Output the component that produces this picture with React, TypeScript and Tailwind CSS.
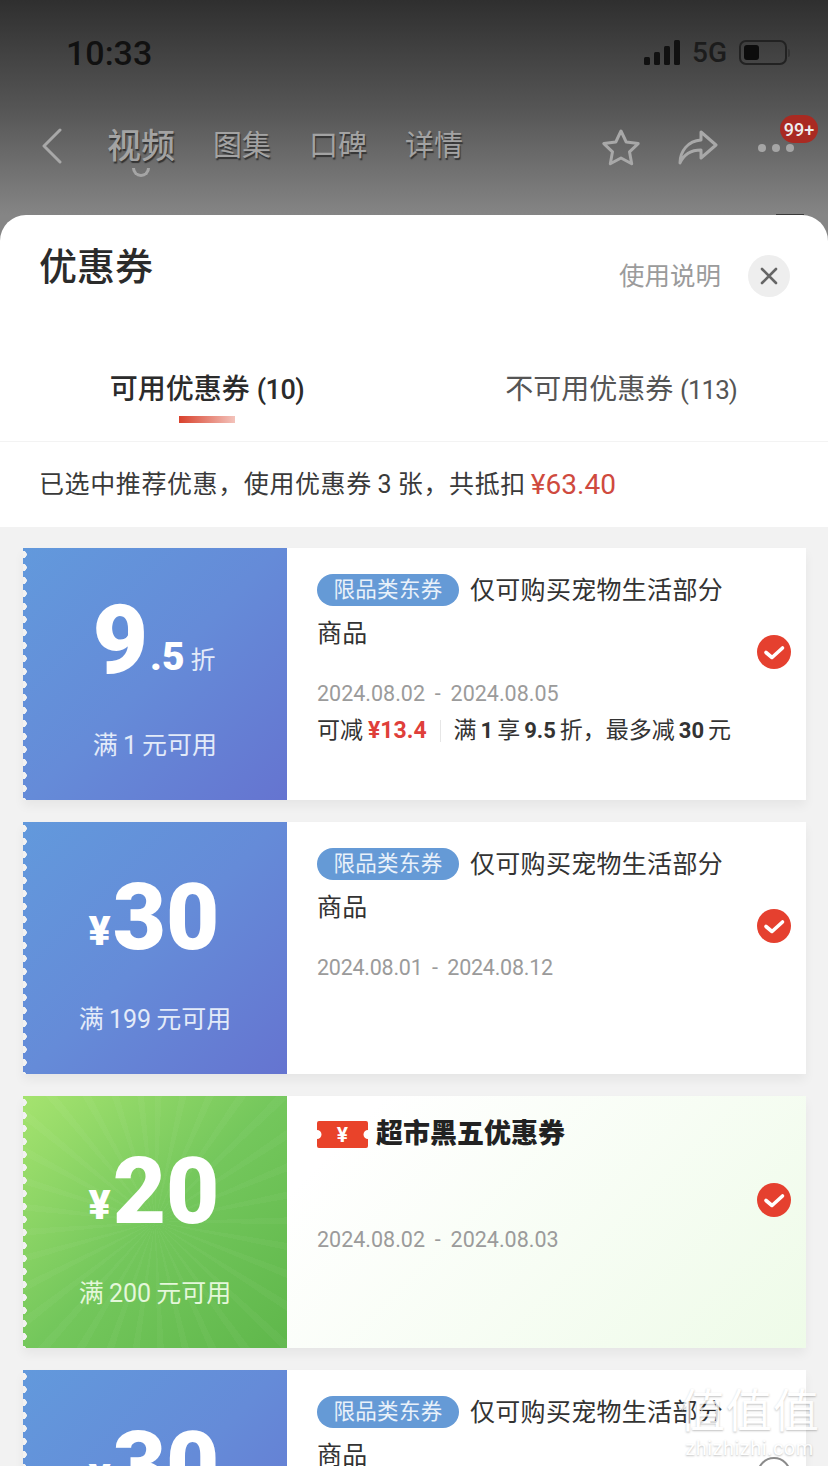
const font = "font-['Roboto','Noto_Sans_CJK_SC',sans-serif]";

function Check({ on = true }: { on?: boolean }) {
  if (!on) {
    return <div className="mt-[87px] mr-[15px] h-[34px] w-[34px] shrink-0 rounded-full border-2 border-[#8a8a8a] bg-white" />;
  }
  return (
    <svg className="mt-[87px] mr-[15px] h-[34px] w-[34px] shrink-0" viewBox="0 0 34 34">
      <circle cx="17" cy="17" r="17" fill="#e5402f" />
      <path d="M9 17.5l6 5 10.5-9.5" fill="none" stroke="#fff" strokeWidth="3.6" strokeLinecap="round" strokeLinejoin="round" />
    </svg>
  );
}

function Pill() {
  return (
    <span className="mr-[11px] inline-block h-[32px] w-[142px] rounded-full bg-[#659ad6] text-center align-[2px] text-[21.5px] leading-[32px] text-[#e9f1fa]">
      限品类东券
    </span>
  );
}

function Title() {
  return (
    <p className="w-[415px] pt-[21px] text-[25px] leading-[43px] tracking-[0.3px] text-[#333]">
      <Pill />
      仅可购买宠物生活部分商品
    </p>
  );
}

function Dates({ text, tight }: { text: string; tight?: boolean }) {
  return (
    <p className={`mt-[24px] text-[21.5px] leading-[30px] text-[#9b9b9b] [word-spacing:4.5px] ${tight ? "tracking-[-0.25px]" : ""}`}>
      {text}
    </p>
  );
}

function Stub({ green, children, label }: { green?: boolean; children: React.ReactNode; label: string }) {
  return (
    <div
      className={`relative flex w-[264px] shrink-0 flex-col items-center overflow-hidden ${
        green
          ? "bg-[linear-gradient(135deg,#a5e36f_0%,#74c75c_50%,#5fb74b_100%)]"
          : "bg-[linear-gradient(135deg,#6299dc_0%,#658bd8_50%,#6574d0_100%)]"
      }`}
    >
      {green && (
        <div className="absolute inset-0 bg-[repeating-conic-gradient(from_0deg_at_50%_50%,rgba(255,255,255,0.03)_0deg_3deg,transparent_3deg_11deg)]" />
      )}
      <div className="absolute inset-y-0 left-0 w-[4px] bg-[radial-gradient(circle_at_0_50%,#f2f2f2_3.5px,transparent_4px)] bg-[length:4px_13px]" />
      <div className="relative flex h-[142px] items-end pr-[2px]">{children}</div>
      <p className={`relative mt-[38px] text-[25px] leading-[36px] ${green ? "text-[#e4f7da]" : "text-[#e3ebf9]"}`}>{label}</p>
    </div>
  );
}

function Amount({ value }: { value: string }) {
  return (
    <div className="flex items-end font-black text-white">
      <span className="mb-[12px] mr-[2px] text-[41px] leading-[41px]">¥</span>
      <span className="text-[92px] leading-[92px]">{value}</span>
    </div>
  );
}

function Card({ children, stub, bg = "bg-white" }: { children: React.ReactNode; stub: React.ReactNode; bg?: string }) {
  return (
    <div className={`flex h-[252px] shrink-0 shadow-[0_6px_10px_rgba(0,0,0,0.05)] ${bg}`}>
      {stub}
      <div className="flex-1 pl-[30px]">{children}</div>
    </div>
  );
}

export default function App() {
  return (
    <div className={`relative h-[1466px] w-[828px] overflow-hidden bg-[linear-gradient(180deg,#2f2f2f_0px,#565656_110px,#858585_215px)] ${font}`}>
      <div className="flex h-[105px] items-center justify-between pr-[38px] pl-[66px]">
        <span className="text-[34px] leading-none font-medium text-[#111]">10:33</span>
        <div className="flex items-center gap-[10px]">
          <svg className="h-[26px] w-[38px]" viewBox="0 0 38 26" fill="#111">
            <rect x="0" y="17" width="6" height="8" rx="1.5" />
            <rect x="10" y="12" width="6" height="13" rx="1.5" />
            <rect x="20" y="6" width="6" height="19" rx="1.5" />
            <rect x="30" y="0" width="6" height="25" rx="1.5" />
          </svg>
          <span className="text-[28px] leading-none font-medium text-[#1c1c1c]">5G</span>
          <div className="ml-[2px] flex items-center">
            <div className="h-[25px] w-[48px] rounded-[7px] border-2 border-[#222] p-[3px]">
              <div className="h-full w-[15px] rounded-[3px] bg-[#0c0c0c]" />
            </div>
            <div className="ml-[1px] h-[8px] w-[2px] rounded-r bg-[#333]" />
          </div>
        </div>
      </div>

      <div className="relative flex h-[110px] items-start pt-[18px]">
        <svg className="mt-[5px] ml-[41px] h-[36px] w-[22px]" viewBox="0 0 22 36" fill="none" stroke="#a8a8a8" strokeWidth="3" strokeLinecap="round" strokeLinejoin="round">
          <path d="M19 2L3 18l16 16" />
        </svg>
        <div className="ml-[44px] flex items-center gap-[38px] text-[#a3a3a3] [text-shadow:1px_2px_1px_#333]">
          <span className="relative text-[34px] leading-[46px] font-medium">
            视频
            <span className="absolute top-[45px] left-[25px] h-[9px] w-[18px] rounded-b-full border-x-[3px] border-b-[3px] border-[#a5a5a5]" />
          </span>
          <span className="text-[29px] leading-[46px]">图集</span>
          <span className="text-[29px] leading-[46px]">口碑</span>
          <span className="text-[29px] leading-[46px]">详情</span>
        </div>
        <div className="ml-auto flex items-center pr-[34px]">
          <svg className="mt-[5px] h-[40px] w-[40px]" viewBox="0 0 40 40" fill="none" stroke="#a8a8a8" strokeWidth="3" strokeLinejoin="round">
            <path d="M20 3l5.2 11 12 1.6-8.7 8.2 2.2 12L20 30l-10.700 5.800 2.200-12L2.800 15.600l12-1.600z" />
          </svg>
          <svg className="mt-[5px] ml-[37px] h-[38px] w-[40px]" viewBox="0 0 40 38" fill="none" stroke="#a8a8a8" strokeWidth="3" strokeLinejoin="round" strokeLinecap="round">
            <path d="M23 3l15 13-15 13v-8C13 21 6 25 2 34c0-12 8-22 21-23z" />
          </svg>
          <div className="relative mt-[5px] ml-[40px] flex gap-[6px]">
            <span className="h-[8px] w-[8px] rounded-full bg-[#a5a5a5]" />
            <span className="h-[8px] w-[8px] rounded-full bg-[#a5a5a5]" />
            <span className="h-[8px] w-[8px] rounded-full bg-[#a5a5a5]" />
            <span className="absolute -top-[29px] -right-[24px] flex h-[28px] w-[38px] items-center justify-center rounded-full bg-[#a92a22] text-[18px] font-medium text-[#eee]">
              99+
            </span>
          </div>
        </div>
        <span className="absolute right-[24px] bottom-0 h-px w-[28px] bg-[#3a3a3a]" />
      </div>

      <div className="flex h-[1251px] flex-col overflow-hidden rounded-t-[26px] bg-white">
        <div className="flex h-[109px] shrink-0 items-start justify-between pt-[24px] pr-[38px] pl-[39px]">
          <h1 className="text-[38px] leading-[56px] font-medium text-[#2b2b2b]">优惠券</h1>
          <div className="flex items-center gap-[27px] pt-[16px]">
            <span className="text-[25.500px] leading-[42px] text-[#9b9b9b]">使用说明</span>
            <div className="flex h-[42px] w-[42px] items-center justify-center rounded-full bg-[#eeeeee]">
              <svg className="h-[20px] w-[20px]" viewBox="0 0 20 20" fill="none" stroke="#666" strokeWidth="2.6" strokeLinecap="round">
                <path d="M3 3l14 14M17 3L3 17" />
              </svg>
            </div>
          </div>
        </div>

        <div className="grid h-[118px] shrink-0 grid-cols-2 border-b border-[#f3f3f3] pt-[44px] text-center text-[28px] leading-[44px]">
          <div className="flex flex-col items-center font-medium text-[#2b2b2b]">
            <span>可用优惠券 <span className="text-[27px] tracking-[-0.5px]">(10)</span></span>
            <span className="mt-[4px] h-[7px] w-[56px] bg-[linear-gradient(90deg,#d9412c_0%,#f3c3bb_100%)]" />
          </div>
          <span className="text-[#555]">不可用优惠券 <span className="text-[26px] tracking-[-1px]">(113)</span></span>
        </div>

        <div className="flex h-[85px] shrink-0 items-center pl-[39px] text-[25px] tracking-[0.6px] text-[#3a3a3a]">
          已选中推荐优惠，使用优惠券&thinsp;3&thinsp;张，共抵扣
          <span className="ml-[5px] text-[28px] tracking-normal text-[#cf4a3e]">¥63.40</span>
        </div>

        <div className="flex flex-1 flex-col gap-[22px] bg-[#f2f2f2] pt-[21px] pr-[22px] pl-[23px]">
          <Card
            stub={
              <Stub label="满&thinsp;1&thinsp;元可用">
                <div className="flex items-end font-black text-white">
                  <span className="text-[96px] leading-[100px]">9</span>
                  <span className="mb-[12px] ml-[2px] text-[39px] leading-[42px]">.5</span>
                  <span className="mb-[11px] ml-[6px] text-[25px] leading-[36px] font-normal text-[#e3ebf9]">折</span>
                </div>
              </Stub>
            }
          >
            <div className="flex justify-between">
              <div>
                <Title />
                <Dates text="2024.08.02 - 2024.08.05" />
                <div className="mt-[6px] flex items-center gap-[4px] whitespace-nowrap text-[23px] leading-[32px] text-[#333]">
                  <span>可减</span>
                  <span className="ml-[1px] font-bold text-[#df3f3a]">¥13.4</span>
                  <span className="mx-[9px] h-[22px] w-px bg-[#e6e6e6]" />
                  <span>满</span>
                  <b className="text-[22px]">1</b>
                  <span>享</span>
                  <b className="text-[22px]">9.5</b>
                  <span>折，最多减</span>
                  <b className="text-[22px]">30</b>
                  <span>元</span>
                </div>
              </div>
              <Check />
            </div>
          </Card>

          <Card stub={<Stub label="满&thinsp;199&thinsp;元可用"><Amount value="30" /></Stub>}>
            <div className="flex justify-between">
              <div>
                <Title />
                <Dates tight text="2024.08.01 - 2024.08.12" />
              </div>
              <Check />
            </div>
          </Card>

          <Card
            bg="bg-[linear-gradient(135deg,#ffffff_35%,#eefbe8_100%)]"
            stub={<Stub green label="满&thinsp;200&thinsp;元可用"><Amount value="20" /></Stub>}
          >
            <div className="flex justify-between">
              <div>
                <div className="flex h-[129px] items-start pt-[25px]">
                  <svg className="h-[27px] w-[51px]" viewBox="0 0 51 27">
                    <path d="M2 0h47a2 2 0 0 1 2 2v7a4.500 4.500 0 0 0 0 9v7a2 2 0 0 1-2 2H2a2 2 0 0 1-2-2v-7a4.500 4.500 0 0 0 0-9V2a2 2 0 0 1 2-2z" fill="#e9432a" />
                    <text x="25.5" y="21" textAnchor="middle" fontSize="21" fontWeight="700" fill="#fff">¥</text>
                  </svg>
                  <span className="ml-[8px] text-[27px] leading-[27px] font-black text-[#222]">超市黑五优惠券</span>
                </div>
                <p className="text-[21.5px] leading-[30px] text-[#9b9b9b] [word-spacing:4.5px]">2024.08.02 - 2024.08.03</p>
              </div>
              <Check />
            </div>
          </Card>

          <Card stub={<Stub label="满&thinsp;199&thinsp;元可用"><Amount value="30" /></Stub>}>
            <div className="flex justify-between">
              <div>
                <Title />
              </div>
              <Check on={false} />
            </div>
          </Card>
        </div>
      </div>

      <div className="pointer-events-none absolute right-[8px] bottom-[6px] flex flex-col items-center text-white opacity-80 [text-shadow:0_1px_2px_rgba(0,0,0,0.3)]">
        <span className="text-[46px] leading-[50px] tracking-[1px]">值值值</span>
        <span className="text-[20px] leading-[24px] tracking-[0.5px]">zhizhizhi.com</span>
      </div>
    </div>
  );
}
